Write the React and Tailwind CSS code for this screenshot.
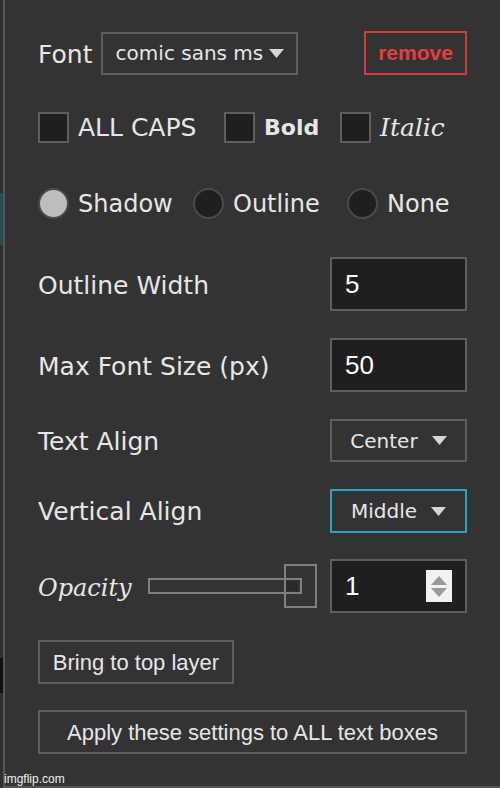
import React from 'react';

function Caret() {
  return (
    <svg width="15" height="9" viewBox="0 0 15 9" className="shrink-0">
      <path d="M0 0 H15 L7.5 9 Z" fill="#d6d6d6" />
    </svg>
  );
}

function Checkbox({ children, className = '' }) {
  return (
    <label className={`flex items-center gap-[9px] ${className}`}>
      <span className="w-[31px] h-[31px] bg-[#1f1f1f] border-2 border-[#5e5e5e] shrink-0" />
      {children}
    </label>
  );
}

function Radio({ checked, children, className = '' }) {
  return (
    <label className={`flex items-center gap-[9px] text-[24px] ${className}`}>
      <span
        className={`w-[31px] h-[31px] rounded-full border-2 border-[#4a4a4a] shrink-0 ${
          checked ? 'bg-[#bdbdbd]' : 'bg-[#1f1f1f]'
        }`}
      />
      <span>{children}</span>
    </label>
  );
}

export default function App() {
  return (
    <div className="w-[500px] h-[788px] flex bg-[#333333] text-[#e6e6e6] font-['DejaVu_Sans',sans-serif] overflow-hidden relative">
      {/* strip of the page behind the panel */}
      <div className="w-[3px] flex flex-col shrink-0">
        <div className="h-[193px] bg-[#2f2f2f]" />
        <div className="h-[52px] bg-[#2b4b52]" />
        <div className="h-[413px] bg-[#2f2f2f]" />
        <div className="h-[35px] bg-[#111111]" />
        <div className="flex-1 bg-[#2f2f2f]" />
      </div>

      <div className="flex-1 flex flex-col border-l-2 border-b-2 border-[#555555] pl-[33px] pr-[33px] text-[25px]">
        {/* Font */}
        <div className="flex items-center h-[44px] mt-[31px]">
          <span className="leading-none pt-[3px]">Font</span>
          <button className="ml-[9px] w-[197px] h-[43px] border-2 border-[#5e5e5e] flex items-center justify-center gap-[6px] text-[20px] text-[#e6e6e6]">
            comic sans ms
            <Caret />
          </button>
          <button className="ml-auto w-[103px] h-[44px] border-2 border-[#d33b3b] text-[#e23f3f] font-['Liberation_Sans',sans-serif] font-bold text-[21px]">
            remove
          </button>
        </div>

        {/* styles */}
        <div className="flex items-center h-[31px] mt-[37px]">
          <Checkbox className="w-[186px]">ALL CAPS</Checkbox>
          <Checkbox className="w-[116px]">
            <span className="font-bold text-[22px]">Bold</span>
          </Checkbox>
          <Checkbox>
            <span className="italic font-['DejaVu_Serif',serif] text-[25px]">Italic</span>
          </Checkbox>
        </div>

        {/* effect */}
        <div className="flex items-center h-[31px] mt-[45px]">
          <Radio checked className="w-[155px]">Shadow</Radio>
          <Radio className="w-[154px]">Outline</Radio>
          <Radio>None</Radio>
        </div>

        <div className="flex items-center h-[54px] mt-[38px]">
          <span className="pt-[4px]">Outline Width</span>
          <div className="ml-auto w-[137px] h-[54px] bg-[#1f1f1f] border-2 border-[#5e5e5e] flex items-center pl-[13px] font-['Liberation_Sans',sans-serif] text-[26px] text-white">
            5
          </div>
        </div>

        <div className="flex items-center h-[54px] mt-[27px]">
          <span className="pt-[4px]">Max Font Size (px)</span>
          <div className="ml-auto w-[137px] h-[54px] bg-[#1f1f1f] border-2 border-[#5e5e5e] flex items-center pl-[13px] font-['Liberation_Sans',sans-serif] text-[26px] text-white">
            50
          </div>
        </div>

        <div className="flex items-center h-[43px] mt-[27px]">
          <span className="pt-[2px]">Text Align</span>
          <button className="ml-auto w-[137px] h-[43px] border-2 border-[#5e5e5e] flex items-center justify-center gap-[14px] text-[20px] text-[#e6e6e6]">
            Center
            <Caret />
          </button>
        </div>

        <div className="flex items-center h-[44px] mt-[27px]">
          <span className="pt-[2px]">Vertical Align</span>
          <button className="ml-auto w-[137px] h-[44px] border-2 border-[#2aa3c6] flex items-center justify-center gap-[14px] text-[20px] text-[#e6e6e6]">
            Middle
            <Caret />
          </button>
        </div>

        {/* opacity */}
        <div className="flex items-center h-[54px] mt-[26px]">
          <span className="italic font-['DejaVu_Serif',serif] text-[24px] w-[110px] pt-[3px]">Opacity</span>
          <div className="relative w-[169px] h-[44px] flex items-center">
            <div className="w-[154px] h-[16px] border-2 border-[#808080] flex justify-end items-center pr-[2px]">
              <div className="w-[14px] h-[10px] bg-[#2b2b2b]" />
            </div>
            <div className="absolute right-0 top-0 w-[33px] h-[44px] border-2 border-[#808080]" />
          </div>
          <div className="ml-auto w-[137px] h-[54px] bg-[#1f1f1f] border-2 border-[#5e5e5e] flex items-center pl-[13px] pr-[13px] font-['Liberation_Sans',sans-serif] text-[26px] text-white">
            <span>1</span>
            <div className="ml-auto w-[26px] h-[32px] bg-[#f2f2f2] flex flex-col items-center justify-center gap-[3px]">
              <svg width="16" height="9" viewBox="0 0 16 9">
                <path d="M8 0 L16 9 H0 Z" fill="#9a9a9a" />
              </svg>
              <svg width="16" height="9" viewBox="0 0 16 9">
                <path d="M0 0 H16 L8 9 Z" fill="#9a9a9a" />
              </svg>
            </div>
          </div>
        </div>

        <button className="mt-[27px] self-start w-[196px] h-[44px] border-2 border-[#5e5e5e] font-['Liberation_Sans',sans-serif] text-[22px] text-[#e6e6e6]">
          Bring to top layer
        </button>

        <button className="mt-[26px] w-full h-[44px] border-2 border-[#5e5e5e] font-['Liberation_Sans',sans-serif] text-[22px] text-[#e6e6e6]">
          Apply these settings to ALL text boxes
        </button>
      </div>

      <span className="absolute left-[4px] bottom-[3px] font-['Liberation_Sans',sans-serif] text-[12px] leading-none text-[#f0f0f0]">
        imgflip.com
      </span>
    </div>
  );
}
